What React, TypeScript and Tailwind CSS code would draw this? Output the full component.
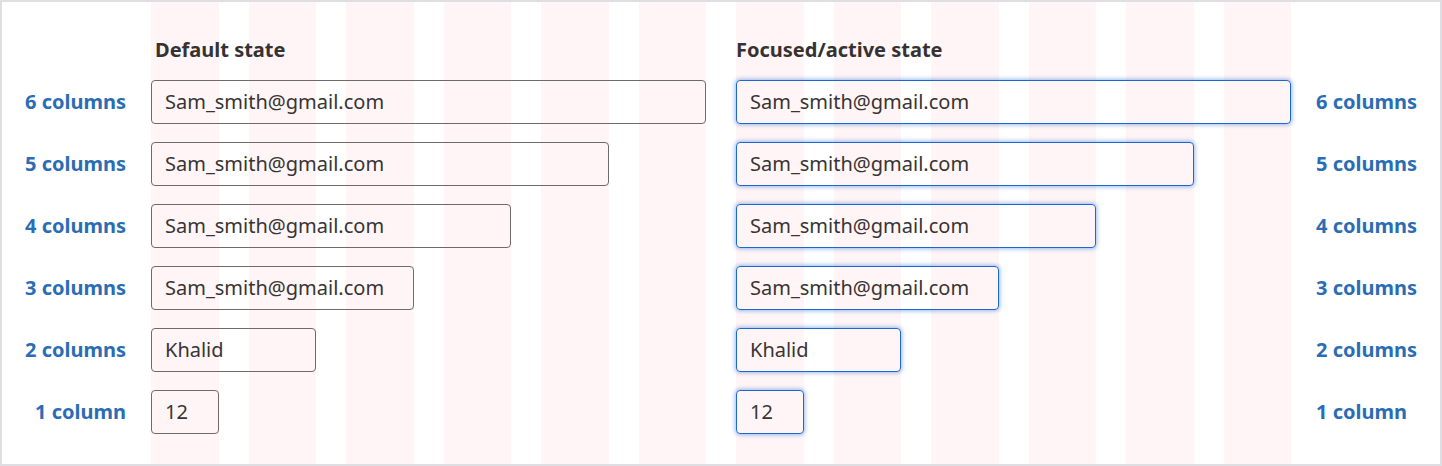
import React from 'react';

const font = { fontFamily: '"Noto Sans", "Open Sans", sans-serif' };

const leftSpan: Record<number, string> = {
  1: 'col-start-1 col-span-1',
  2: 'col-start-1 col-span-2',
  3: 'col-start-1 col-span-3',
  4: 'col-start-1 col-span-4',
  5: 'col-start-1 col-span-5',
  6: 'col-start-1 col-span-6',
};

const rightSpan: Record<number, string> = {
  1: 'col-start-7 col-span-1',
  2: 'col-start-7 col-span-2',
  3: 'col-start-7 col-span-3',
  4: 'col-start-7 col-span-4',
  5: 'col-start-7 col-span-5',
  6: 'col-start-7 col-span-6',
};

const rows = [
  { cols: 6, label: '6 columns', value: 'Sam_smith@gmail.com' },
  { cols: 5, label: '5 columns', value: 'Sam_smith@gmail.com' },
  { cols: 4, label: '4 columns', value: 'Sam_smith@gmail.com' },
  { cols: 3, label: '3 columns', value: 'Sam_smith@gmail.com' },
  { cols: 2, label: '2 columns', value: 'Khalid' },
  { cols: 1, label: '1 column', value: '12' },
];

function Field({ value, focused, span }: { value: string; focused?: boolean; span: string }) {
  return (
    <div
      className={`${span} h-[44px] flex items-center px-[13px] rounded-[4px] border text-[20px] text-[#383434] ${
        focused
          ? 'border-[#1d68d0] shadow-[0_0_4px_1px_rgba(29,104,208,0.45)]'
          : 'border-[#6f6a6a]'
      }`}
    >
      {value}
    </div>
  );
}

export default function App() {
  return (
    <div
      className="relative w-[1442px] h-[466px] border-2 border-[#dedee3] bg-white overflow-hidden"
      style={font}
    >
      {/* column grid overlay */}
      <div className="absolute top-0 bottom-0 left-[149px] w-[1140px] grid grid-cols-12 gap-x-[30px]">
        {Array.from({ length: 12 }).map((_, i) => (
          <div key={i} className="bg-[#fff5f6]" />
        ))}
      </div>

      <div className="relative flex flex-col pt-[34px]">
        <div className="flex">
          <div className="w-[149px]" />
          <div className="w-[1140px] grid grid-cols-12 gap-x-[30px] h-[27px]">
            <h2 className="col-start-1 col-span-6 pl-[4px] text-[20px] leading-[27px] font-bold text-[#363232]">
              Default state
            </h2>
            <h2 className="col-start-7 col-span-6 text-[20px] leading-[27px] font-bold text-[#363232]">
              Focused/active state
            </h2>
          </div>
        </div>

        <div className="flex flex-col gap-[18px] mt-[17px]">
          {rows.map((r) => (
            <div key={r.label} className="flex items-center">
              <div className="w-[124px] text-right text-[20px] font-bold text-[#2a6db5]">{r.label}</div>
              <div className="w-[25px]" />
              <div className="w-[1140px] grid grid-cols-12 gap-x-[30px]">
                <Field value={r.value} span={leftSpan[r.cols]} />
                <Field value={r.value} span={rightSpan[r.cols]} focused />
              </div>
              <div className="ml-[25px] text-[20px] font-bold text-[#2a6db5]">{r.label}</div>
            </div>
          ))}
        </div>
      </div>
    </div>
  );
}
